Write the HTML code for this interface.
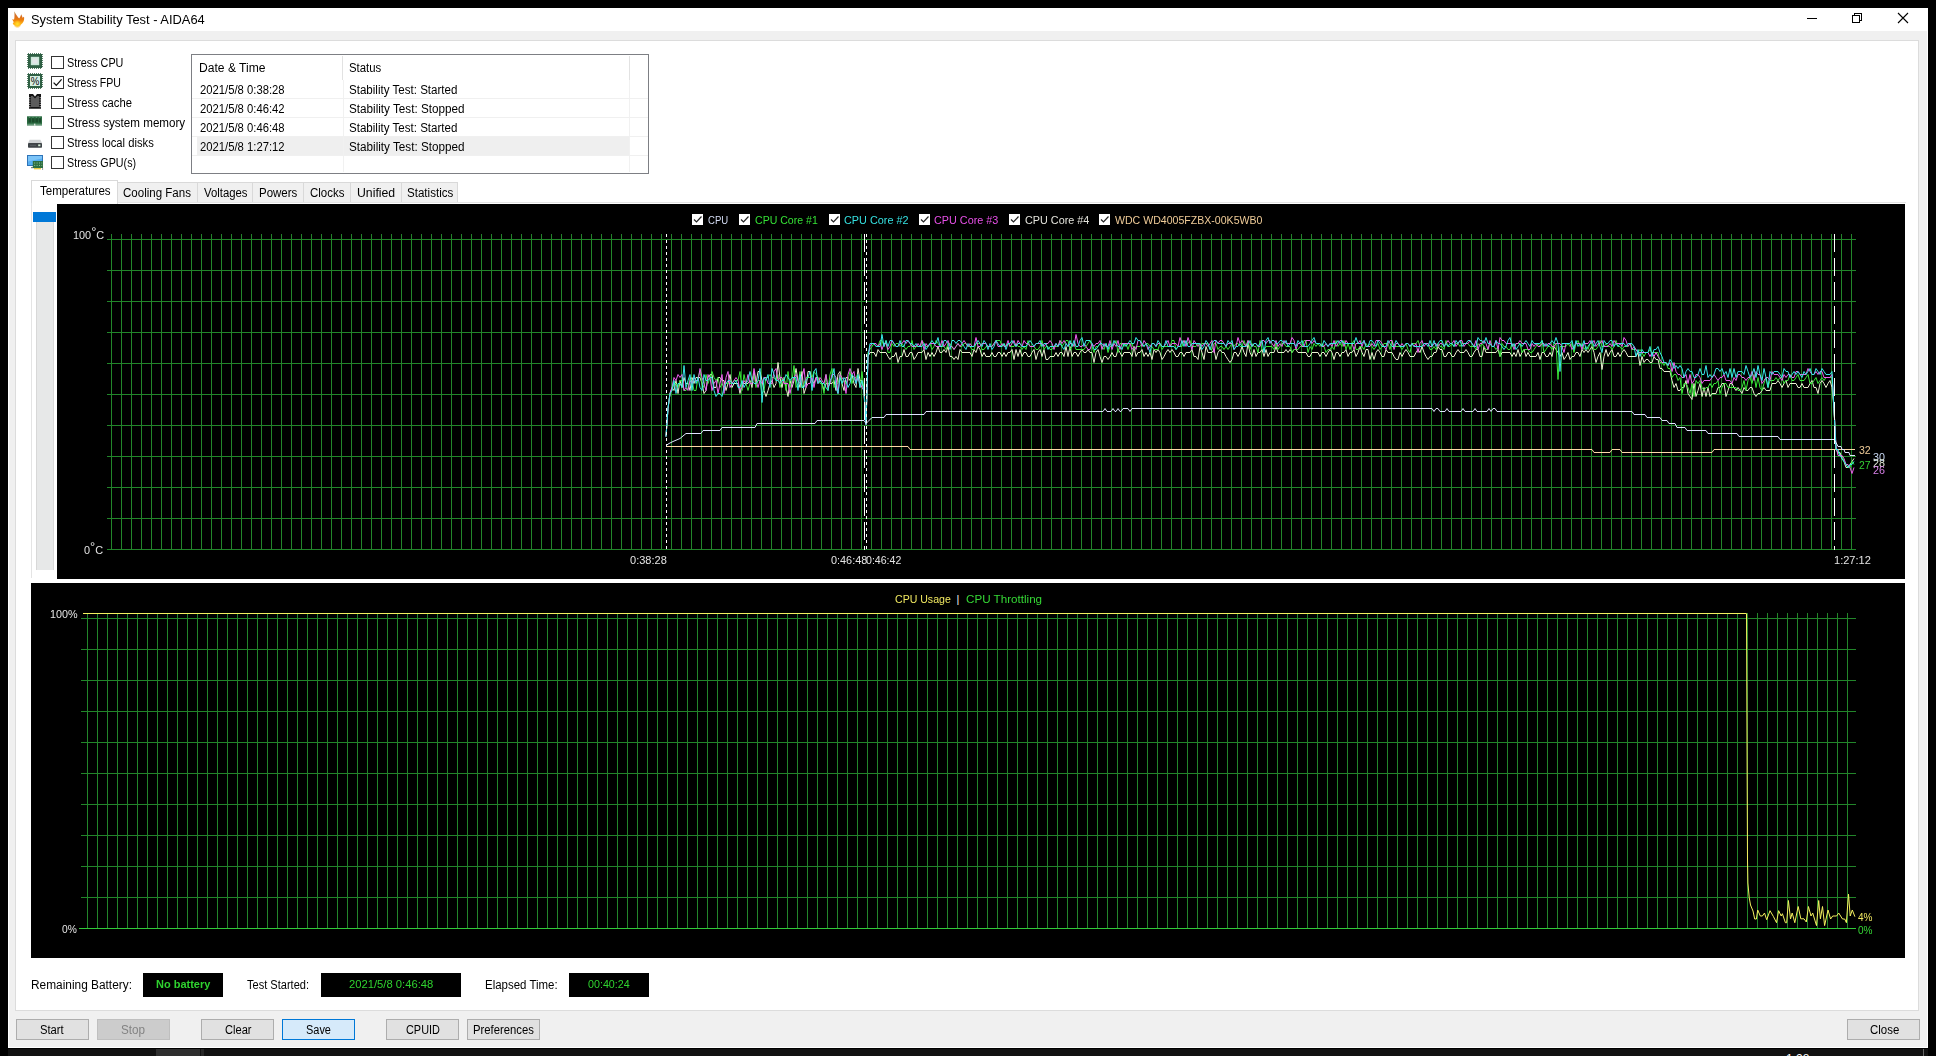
<!DOCTYPE html><html><head><meta charset="utf-8"><title>System Stability Test - AIDA64</title><style>
*{box-sizing:border-box}
html,body{margin:0;padding:0}
body{width:1936px;height:1056px;background:#000;overflow:hidden;position:relative;font-family:'Liberation Sans',sans-serif}
.a{position:absolute}
.t{position:absolute;white-space:pre;line-height:20px;height:20px;transform-origin:0 0;font-family:'Liberation Sans',sans-serif}
.ch{position:absolute;display:block}
.btn{position:absolute;top:1019px;height:21px;width:73px;background:#e1e1e1;border:1px solid #adadad}
.tab{position:absolute;top:182px;height:21px;background:#f0f0f0;border:1px solid #d9d9d9;border-bottom:none}
.cb{position:absolute;left:51px;width:13px;height:13px;background:#fff;border:1px solid #333}
.hl{position:absolute;left:192px;width:437px;height:1px;background:#f0f0f0}
.bk{position:absolute;top:973px;height:24px;background:#000}
</style></head><body><div class="a" style="left:8px;top:8px;width:1920px;height:1040px;background:#f0f0f0;border:1px solid #fff"></div>
<div class="a" style="left:8px;top:8px;width:1920px;height:23px;background:#fff"></div>
<div class="a" style="left:8px;top:1049px;width:1920px;height:7px;background:#111"></div>
<div class="a" style="left:156px;top:1049px;width:44px;height:7px;background:#2e2e2e"></div>
<div class="a" style="left:201px;top:1049px;width:3px;height:7px;background:#262626"></div>
<div class="a" style="left:1923px;top:1049px;width:1px;height:7px;background:#666"></div>
<div class="a" style="left:1786px;top:1052.5px;width:30px;height:4px;overflow:hidden"><span style="position:absolute;left:0;top:0;font-size:12px;line-height:12px;color:#fff;white-space:pre">1:28</span></div>
<svg class="a" style="left:1800px;top:8px" width="120" height="23" viewBox="1800 8 120 23" shape-rendering="crispEdges"><path d="M1807 18.5h10" stroke="#000"/><path d="M1852.5 15.5h7v7h-7z" fill="none" stroke="#000"/><path d="M1854.5 15.5v-2h7v7h-2" fill="none" stroke="#000"/><path d="M1898 13l10 10M1908 13l-10 10" stroke="#000" stroke-width="1.1" shape-rendering="geometricPrecision"/></svg>
<svg class="a" style="left:8px;top:8px" width="22" height="22" viewBox="8 8 22 22"><defs><linearGradient id="fg" x1="0" y1="11" x2="0" y2="27" gradientUnits="userSpaceOnUse"><stop offset="0" stop-color="#b89450"/><stop offset=".3" stop-color="#d8702a"/><stop offset=".55" stop-color="#ec7c0c"/><stop offset=".8" stop-color="#ffb418"/><stop offset="1" stop-color="#ffe23a"/></linearGradient><radialGradient id="fy" cx="17.4" cy="24" r="4.2" gradientUnits="userSpaceOnUse"><stop offset="0" stop-color="#ffe030"/><stop offset=".55" stop-color="#ffc21a" stop-opacity=".85"/><stop offset="1" stop-color="#ff9a10" stop-opacity="0"/></radialGradient><filter id="fb" x="-20%" y="-20%" width="140%" height="140%"><feGaussianBlur stdDeviation=".35"/></filter></defs><g filter="url(#fb)"><path d="M14.2 11.3C15.2 13.2 16.6 15.4 18 17.2C18.5 17.9 19 18.4 19.4 18.3C20 17.2 20.7 15.6 21.3 14.2C21.8 15.4 22.2 16.6 22.6 17.8C23 17.4 23.5 17 24 16.7C24.3 18.4 24.2 20.2 23.4 21.8C22.3 24 20.2 25.8 17.6 26.1C16.2 25.9 14.5 25.3 13.2 24.4C13.4 24.2 13.2 23.8 12.7 23.4C13.3 23 13.7 22.5 13.6 21.9C13.2 21 12.6 20.2 12.1 19.3C12.9 19.4 13.6 19.6 14.1 19.5C14.6 17 14.6 14 14.2 11.3Z" fill="url(#fg)"/><circle cx="17.4" cy="24" r="4.2" fill="url(#fy)"/></g></svg>
<div class="a" style="left:15px;top:40px;width:1904px;height:971px;background:#fff;border:1px solid #dcdcdc"></div>
<svg class="a" style="left:26px;top:52px" width="20" height="120" viewBox="26 52 20 120"><rect x="28" y="54" width="14" height="14" fill="#2f6044"/><path d="M28 53.6h14M28 68.4h14" stroke="#2f6044" stroke-width="0.9" stroke-dasharray="1 1"/><path d="M27.6 54v14M42.4 54v14" stroke="#2f6044" stroke-width="0.9" stroke-dasharray="1 1"/><rect x="30.8" y="56.8" width="8.4" height="8.4" fill="#cbe8da"/><rect x="32.4" y="58.4" width="5.2" height="5.2" fill="#e8e4ea" opacity=".85"/><rect x="28" y="74" width="14" height="14" fill="#2f6044"/><path d="M28 73.6h14M28 88.4h14" stroke="#2f6044" stroke-width="0.9" stroke-dasharray="1 1"/><path d="M27.6 74v14M42.4 74v14" stroke="#2f6044" stroke-width="0.9" stroke-dasharray="1 1"/><rect x="30" y="76" width="10" height="10" fill="#d6eee2"/><text x="35" y="84.7" font-family="Liberation Sans,sans-serif" font-size="10.5" text-anchor="middle" fill="#0a0a0a" textLength="8.6" lengthAdjust="spacingAndGlyphs">%</text><path d="M29 94h4l2 2.4l2-2.4h4v14.7h-12z" fill="#141414"/><path d="M31 96h1.6l2.4 2.6l2.4-2.6h1.6v11h-8z" fill="#5c5c5c"/><path d="M29.8 97.2v10M40.2 97.2v10" stroke="#fff" stroke-width="0.9" stroke-dasharray="1 1.25"/><rect x="27" y="116.3" width="15" height="9.2" fill="#2a6a40"/><path d="M28.5 118.2h2.6v4.2h-2.6zM32 118.2h2.6v4.2h-2.6zM35.4 118.2h2.6v4.2h-2.6zM38.8 118.2h2.2v4.2h-2.2z" fill="#1b4a2b"/><path d="M29 117.2h11.5" stroke="#6fae86" stroke-width="0.8" stroke-dasharray="1.2 2.2"/><path d="M27 124.4h7M35.6 124.4h6.4" stroke="#5f9472" stroke-width="1.2"/><rect x="34.2" y="123.6" width="1.2" height="2" fill="#fff"/><path d="M29.6 139.8h10.8l1.6 3.2h-14z" fill="#cfd2d4"/><rect x="28" y="143" width="14" height="4.8" rx="0.8" fill="#3f4448"/><rect x="30" y="144.8" width="6" height="1" fill="#5a6064"/><rect x="38.2" y="144.4" width="2.2" height="1.8" fill="#d8f0d8"/><rect x="27" y="155" width="16" height="11" fill="#2f74b8"/><rect x="28" y="156" width="14" height="9" fill="#56aef2"/><path d="M28 156h14v2.5l-14 3z" fill="#7cc4f8"/><rect x="31" y="167" width="6" height="1.2" fill="#7a8085"/><rect x="32.8" y="161" width="10.2" height="7" fill="#2e6e40"/><path d="M34.2 163h8M34.2 165.4h8" stroke="#9fd0a8" stroke-width="0.9" stroke-dasharray="1 1.4"/><path d="M34 168.7h7" stroke="#e8c83a" stroke-width="1.3"/><path d="M42.6 168v2" stroke="#888" stroke-width="0.8"/></svg>
<div class="cb" style="top:56px"></div>
<div class="cb" style="top:76px"></div>
<div class="cb" style="top:96px"></div>
<div class="cb" style="top:116px"></div>
<div class="cb" style="top:136px"></div>
<div class="cb" style="top:156px"></div>
<svg class="a" style="left:51px;top:76px" width="13" height="13" viewBox="0 0 13 13"><path d="M2.6 6.6L5.3 9.3L10.6 3.4" fill="none" stroke="#111" stroke-width="1.25"/></svg>
<div class="a" style="left:191px;top:54px;width:458px;height:120px;background:#fff;border:1px solid #7d7f84"></div>
<div class="a" style="left:197px;top:137px;width:432px;height:18px;background:#efefef"></div>
<div class="a" style="left:342px;top:56px;width:1px;height:24px;background:#e2e2e2"></div>
<div class="a" style="left:629px;top:56px;width:1px;height:24px;background:#e2e2e2"></div>
<div class="a" style="left:343px;top:80px;width:1px;height:92px;background:#f1f1f1"></div>
<div class="a" style="left:629px;top:80px;width:1px;height:92px;background:#f1f1f1"></div>
<div class="hl" style="top:98px;width:456px"></div>
<div class="hl" style="top:117px;width:456px"></div>
<div class="hl" style="top:136px;width:456px"></div>
<div class="hl" style="top:155px;width:456px"></div>
<div class="tab" style="left:117px;width:81px"></div>
<div class="tab" style="left:197px;width:56px"></div>
<div class="tab" style="left:252px;width:52px"></div>
<div class="tab" style="left:303px;width:48px"></div>
<div class="tab" style="left:350px;width:52px"></div>
<div class="tab" style="left:401px;width:57px"></div>
<div class="a" style="left:31px;top:180px;width:87px;height:24px;background:#fff;border:1px solid #d9d9d9;border-bottom:none"></div>
<div class="a" style="left:31px;top:203px;width:1px;height:375px;background:#e4e4e4"></div>
<div class="a" style="left:118px;top:202px;width:1788px;height:1px;background:#e4e4e4"></div>
<div class="a" style="left:36px;top:222px;width:18px;height:348px;background:#e7e8e8;border-left:1px solid #d8d8d8;border-right:1px solid #d8d8d8"></div>
<div class="a" style="left:33px;top:212px;width:23px;height:10px;background:#0078d7"></div>
<svg class="ch" style="left:57px;top:204px" width="1848" height="375" viewBox="57 204 1848 375" shape-rendering="crispEdges"><rect x="57" y="204" width="1848" height="375" fill="#000"/><path d="M111.5 234V550 M121.5 234V550 M131.5 234V550 M141.5 234V550 M151.5 234V550 M161.5 234V550 M171.5 234V550 M181.5 234V550 M191.5 234V550 M201.5 234V550 M211.5 234V550 M221.5 234V550 M231.5 234V550 M241.5 234V550 M251.5 234V550 M261.5 234V550 M271.5 234V550 M281.5 234V550 M291.5 234V550 M301.5 234V550 M311.5 234V550 M321.5 234V550 M331.5 234V550 M341.5 234V550 M351.5 234V550 M361.5 234V550 M371.5 234V550 M381.5 234V550 M391.5 234V550 M401.5 234V550 M411.5 234V550 M421.5 234V550 M431.5 234V550 M441.5 234V550 M451.5 234V550 M461.5 234V550 M471.5 234V550 M481.5 234V550 M491.5 234V550 M501.5 234V550 M511.5 234V550 M521.5 234V550 M531.5 234V550 M541.5 234V550 M551.5 234V550 M561.5 234V550 M571.5 234V550 M581.5 234V550 M591.5 234V550 M601.5 234V550 M611.5 234V550 M621.5 234V550 M631.5 234V550 M641.5 234V550 M651.5 234V550 M661.5 234V550 M671.5 234V550 M681.5 234V550 M691.5 234V550 M701.5 234V550 M711.5 234V550 M721.5 234V550 M731.5 234V550 M741.5 234V550 M751.5 234V550 M761.5 234V550 M771.5 234V550 M781.5 234V550 M791.5 234V550 M801.5 234V550 M811.5 234V550 M821.5 234V550 M831.5 234V550 M841.5 234V550 M851.5 234V550 M861.5 234V550 M871.5 234V550 M881.5 234V550 M891.5 234V550 M901.5 234V550 M911.5 234V550 M921.5 234V550 M931.5 234V550 M941.5 234V550 M951.5 234V550 M961.5 234V550 M971.5 234V550 M981.5 234V550 M991.5 234V550 M1001.5 234V550 M1011.5 234V550 M1021.5 234V550 M1031.5 234V550 M1041.5 234V550 M1051.5 234V550 M1061.5 234V550 M1071.5 234V550 M1081.5 234V550 M1091.5 234V550 M1101.5 234V550 M1111.5 234V550 M1121.5 234V550 M1131.5 234V550 M1141.5 234V550 M1151.5 234V550 M1161.5 234V550 M1171.5 234V550 M1181.5 234V550 M1191.5 234V550 M1201.5 234V550 M1211.5 234V550 M1221.5 234V550 M1231.5 234V550 M1241.5 234V550 M1251.5 234V550 M1261.5 234V550 M1271.5 234V550 M1281.5 234V550 M1291.5 234V550 M1301.5 234V550 M1311.5 234V550 M1321.5 234V550 M1331.5 234V550 M1341.5 234V550 M1351.5 234V550 M1361.5 234V550 M1371.5 234V550 M1381.5 234V550 M1391.5 234V550 M1401.5 234V550 M1411.5 234V550 M1421.5 234V550 M1431.5 234V550 M1441.5 234V550 M1451.5 234V550 M1461.5 234V550 M1471.5 234V550 M1481.5 234V550 M1491.5 234V550 M1501.5 234V550 M1511.5 234V550 M1521.5 234V550 M1531.5 234V550 M1541.5 234V550 M1551.5 234V550 M1561.5 234V550 M1571.5 234V550 M1581.5 234V550 M1591.5 234V550 M1601.5 234V550 M1611.5 234V550 M1621.5 234V550 M1631.5 234V550 M1641.5 234V550 M1651.5 234V550 M1661.5 234V550 M1671.5 234V550 M1681.5 234V550 M1691.5 234V550 M1701.5 234V550 M1711.5 234V550 M1721.5 234V550 M1731.5 234V550 M1741.5 234V550 M1751.5 234V550 M1761.5 234V550 M1771.5 234V550 M1781.5 234V550 M1791.5 234V550 M1801.5 234V550 M1811.5 234V550 M1821.5 234V550 M1831.5 234V550 M1841.5 234V550 M1851.5 234V550 M107 239.5H1856 M107 270.5H1856 M107 301.5H1856 M107 332.5H1856 M107 363.5H1856 M107 394.5H1856 M107 425.5H1856 M107 456.5H1856 M107 487.5H1856 M107 518.5H1856 M107 549.5H1856" stroke="#22862a" stroke-width="1" fill="none"/><polyline points="666.0,446.5 908.0,446.5 910.0,449.5 1592.0,449.5 1594.0,452.5 1610.0,452.5 1612.0,449.5 1620.0,449.5 1622.0,452.5 1712.0,452.5 1714.0,449.5 1855.0,449.5" fill="none" stroke="#ffd8a8" stroke-width="1" shape-rendering="geometricPrecision" stroke-linejoin="bevel" /><polyline points="666.0,436.5 668.0,408.5 670.0,393.5 672.0,387.5 674.0,390.5 676.0,380.5 678.0,393.5 680.0,380.5 682.0,387.5 684.0,377.5 686.0,383.5 688.0,383.5 690.0,390.5 692.0,377.5 694.0,383.5 696.0,377.5 698.0,377.5 700.0,377.5 702.0,383.5 704.0,393.5 706.0,390.5 708.0,377.5 710.0,374.5 712.0,374.5 714.0,387.5 716.0,387.5 718.0,377.5 720.0,377.5 722.0,380.5 724.0,380.5 726.0,390.5 728.0,383.5 730.0,374.5 732.0,387.5 734.0,383.5 736.0,383.5 738.0,383.5 740.0,393.5 742.0,383.5 744.0,383.5 746.0,383.5 748.0,383.5 750.0,380.5 752.0,387.5 754.0,371.5 756.0,383.5 758.0,371.5 760.0,371.5 762.0,380.5 764.0,390.5 766.0,396.5 768.0,390.5 770.0,383.5 772.0,380.5 774.0,387.5 776.0,383.5 778.0,362.5 780.0,377.5 782.0,387.5 784.0,377.5 786.0,387.5 788.0,396.5 790.0,380.5 792.0,387.5 794.0,380.5 796.0,368.5 798.0,380.5 800.0,387.5 802.0,371.5 804.0,393.5 806.0,387.5 808.0,371.5 810.0,371.5 812.0,380.5 814.0,383.5 816.0,377.5 818.0,377.5 820.0,380.5 822.0,383.5 824.0,390.5 826.0,383.5 828.0,383.5 830.0,383.5 832.0,383.5 834.0,380.5 836.0,390.5 838.0,374.5 840.0,371.5 842.0,383.5 844.0,390.5 846.0,377.5 848.0,377.5 850.0,380.5 852.0,374.5 854.0,383.5 856.0,387.5 858.0,368.5 860.0,380.5 862.0,380.5 864.0,393.5 866.0,424.5 868.0,356.5 870.0,352.5 872.0,352.5 874.0,352.5 876.0,356.5 878.0,349.5 880.0,352.5 882.0,352.5 884.0,352.5 886.0,352.5 888.0,356.5 890.0,359.5 892.0,356.5 894.0,356.5 896.0,352.5 898.0,362.5 900.0,356.5 902.0,356.5 904.0,349.5 906.0,356.5 908.0,356.5 910.0,352.5 912.0,352.5 914.0,359.5 916.0,356.5 918.0,352.5 920.0,352.5 922.0,352.5 924.0,349.5 926.0,359.5 928.0,352.5 930.0,356.5 932.0,352.5 934.0,356.5 936.0,352.5 938.0,346.5 940.0,352.5 942.0,352.5 944.0,349.5 946.0,352.5 948.0,346.5 950.0,356.5 952.0,356.5 954.0,359.5 956.0,356.5 958.0,359.5 960.0,349.5 962.0,352.5 964.0,352.5 966.0,352.5 968.0,352.5 970.0,352.5 972.0,356.5 974.0,349.5 976.0,352.5 978.0,346.5 980.0,349.5 982.0,356.5 984.0,352.5 986.0,356.5 988.0,356.5 990.0,356.5 992.0,352.5 994.0,356.5 996.0,356.5 998.0,352.5 1000.0,352.5 1002.0,356.5 1004.0,352.5 1006.0,356.5 1008.0,352.5 1010.0,352.5 1012.0,349.5 1014.0,359.5 1016.0,349.5 1018.0,356.5 1020.0,349.5 1022.0,356.5 1024.0,352.5 1026.0,352.5 1028.0,356.5 1030.0,356.5 1032.0,352.5 1034.0,349.5 1036.0,359.5 1038.0,352.5 1040.0,349.5 1042.0,356.5 1044.0,349.5 1046.0,359.5 1048.0,359.5 1050.0,356.5 1052.0,356.5 1054.0,356.5 1056.0,352.5 1058.0,356.5 1060.0,352.5 1062.0,352.5 1064.0,356.5 1066.0,346.5 1068.0,356.5 1070.0,346.5 1072.0,356.5 1074.0,352.5 1076.0,352.5 1078.0,356.5 1080.0,352.5 1082.0,349.5 1084.0,352.5 1086.0,352.5 1088.0,349.5 1090.0,352.5 1092.0,352.5 1094.0,362.5 1096.0,352.5 1098.0,349.5 1100.0,356.5 1102.0,362.5 1104.0,356.5 1106.0,356.5 1108.0,359.5 1110.0,356.5 1112.0,352.5 1114.0,356.5 1116.0,356.5 1118.0,349.5 1120.0,352.5 1122.0,356.5 1124.0,352.5 1126.0,352.5 1128.0,352.5 1130.0,352.5 1132.0,356.5 1134.0,346.5 1136.0,356.5 1138.0,352.5 1140.0,352.5 1142.0,349.5 1144.0,356.5 1146.0,352.5 1148.0,356.5 1150.0,352.5 1152.0,359.5 1154.0,349.5 1156.0,352.5 1158.0,349.5 1160.0,352.5 1162.0,359.5 1164.0,356.5 1166.0,352.5 1168.0,349.5 1170.0,352.5 1172.0,349.5 1174.0,352.5 1176.0,356.5 1178.0,356.5 1180.0,352.5 1182.0,352.5 1184.0,356.5 1186.0,352.5 1188.0,352.5 1190.0,352.5 1192.0,349.5 1194.0,356.5 1196.0,356.5 1198.0,359.5 1200.0,346.5 1202.0,352.5 1204.0,359.5 1206.0,346.5 1208.0,352.5 1210.0,352.5 1212.0,352.5 1214.0,349.5 1216.0,359.5 1218.0,352.5 1220.0,349.5 1222.0,352.5 1224.0,352.5 1226.0,356.5 1228.0,359.5 1230.0,362.5 1232.0,359.5 1234.0,352.5 1236.0,352.5 1238.0,356.5 1240.0,352.5 1242.0,346.5 1244.0,352.5 1246.0,356.5 1248.0,343.5 1250.0,352.5 1252.0,356.5 1254.0,349.5 1256.0,356.5 1258.0,352.5 1260.0,352.5 1262.0,349.5 1264.0,356.5 1266.0,349.5 1268.0,356.5 1270.0,352.5 1272.0,352.5 1274.0,352.5 1276.0,346.5 1278.0,352.5 1280.0,352.5 1282.0,352.5 1284.0,352.5 1286.0,349.5 1288.0,352.5 1290.0,349.5 1292.0,352.5 1294.0,349.5 1296.0,349.5 1298.0,352.5 1300.0,352.5 1302.0,352.5 1304.0,352.5 1306.0,352.5 1308.0,356.5 1310.0,356.5 1312.0,352.5 1314.0,352.5 1316.0,352.5 1318.0,352.5 1320.0,356.5 1322.0,352.5 1324.0,352.5 1326.0,356.5 1328.0,352.5 1330.0,349.5 1332.0,352.5 1334.0,359.5 1336.0,352.5 1338.0,352.5 1340.0,356.5 1342.0,352.5 1344.0,352.5 1346.0,349.5 1348.0,356.5 1350.0,352.5 1352.0,352.5 1354.0,349.5 1356.0,356.5 1358.0,352.5 1360.0,346.5 1362.0,352.5 1364.0,356.5 1366.0,349.5 1368.0,349.5 1370.0,359.5 1372.0,352.5 1374.0,359.5 1376.0,352.5 1378.0,349.5 1380.0,352.5 1382.0,356.5 1384.0,356.5 1386.0,349.5 1388.0,352.5 1390.0,352.5 1392.0,352.5 1394.0,356.5 1396.0,359.5 1398.0,359.5 1400.0,352.5 1402.0,356.5 1404.0,352.5 1406.0,349.5 1408.0,352.5 1410.0,356.5 1412.0,356.5 1414.0,356.5 1416.0,352.5 1418.0,349.5 1420.0,352.5 1422.0,346.5 1424.0,352.5 1426.0,356.5 1428.0,359.5 1430.0,356.5 1432.0,356.5 1434.0,352.5 1436.0,352.5 1438.0,346.5 1440.0,349.5 1442.0,349.5 1444.0,356.5 1446.0,356.5 1448.0,352.5 1450.0,352.5 1452.0,356.5 1454.0,356.5 1456.0,352.5 1458.0,349.5 1460.0,352.5 1462.0,352.5 1464.0,352.5 1466.0,349.5 1468.0,352.5 1470.0,356.5 1472.0,356.5 1474.0,352.5 1476.0,349.5 1478.0,349.5 1480.0,356.5 1482.0,356.5 1484.0,346.5 1486.0,352.5 1488.0,352.5 1490.0,352.5 1492.0,352.5 1494.0,352.5 1496.0,352.5 1498.0,349.5 1500.0,356.5 1502.0,352.5 1504.0,352.5 1506.0,352.5 1508.0,352.5 1510.0,352.5 1512.0,356.5 1514.0,352.5 1516.0,356.5 1518.0,349.5 1520.0,356.5 1522.0,352.5 1524.0,349.5 1526.0,356.5 1528.0,352.5 1530.0,356.5 1532.0,356.5 1534.0,356.5 1536.0,356.5 1538.0,352.5 1540.0,359.5 1542.0,352.5 1544.0,352.5 1546.0,356.5 1548.0,356.5 1550.0,352.5 1552.0,356.5 1554.0,346.5 1556.0,349.5 1558.0,352.5 1560.0,356.5 1562.0,352.5 1564.0,359.5 1566.0,356.5 1568.0,352.5 1570.0,359.5 1572.0,356.5 1574.0,356.5 1576.0,352.5 1578.0,352.5 1580.0,356.5 1582.0,349.5 1584.0,352.5 1586.0,349.5 1588.0,352.5 1590.0,349.5 1592.0,346.5 1594.0,352.5 1596.0,362.5 1598.0,356.5 1600.0,352.5 1602.0,369.5 1604.0,356.5 1606.0,349.5 1608.0,356.5 1610.0,352.5 1612.0,349.5 1614.0,356.5 1616.0,356.5 1618.0,352.5 1620.0,356.5 1622.0,352.5 1624.0,349.5 1626.0,352.5 1628.0,356.5 1630.0,356.5 1632.0,356.5 1634.0,356.5 1636.0,356.5 1638.0,352.5 1640.0,365.5 1642.0,356.5 1644.0,362.5 1646.0,359.5 1648.0,359.5 1650.0,362.5 1652.0,362.5 1654.0,356.5 1656.0,359.5 1658.0,359.5 1660.0,368.5 1662.0,368.5 1664.0,371.5 1666.0,371.5 1668.0,371.5 1670.0,371.5 1672.0,380.5 1674.0,387.5 1676.0,383.5 1678.0,390.5 1680.0,390.5 1682.0,387.5 1684.0,387.5 1686.0,380.5 1688.0,393.5 1690.0,396.5 1692.0,399.5 1694.0,383.5 1696.0,396.5 1698.0,390.5 1700.0,383.5 1702.0,396.5 1704.0,387.5 1706.0,396.5 1708.0,387.5 1710.0,396.5 1712.0,393.5 1714.0,393.5 1716.0,393.5 1718.0,387.5 1720.0,387.5 1722.0,383.5 1724.0,383.5 1726.0,396.5 1728.0,390.5 1730.0,383.5 1732.0,383.5 1734.0,387.5 1736.0,390.5 1738.0,387.5 1740.0,390.5 1742.0,393.5 1744.0,387.5 1746.0,390.5 1748.0,390.5 1750.0,387.5 1752.0,387.5 1754.0,393.5 1756.0,396.5 1758.0,393.5 1760.0,393.5 1762.0,390.5 1764.0,387.5 1766.0,390.5 1768.0,390.5 1770.0,390.5 1772.0,383.5 1774.0,383.5 1776.0,383.5 1778.0,380.5 1780.0,383.5 1782.0,387.5 1784.0,383.5 1786.0,380.5 1788.0,387.5 1790.0,383.5 1792.0,383.5 1794.0,383.5 1796.0,383.5 1798.0,387.5 1800.0,387.5 1802.0,383.5 1804.0,387.5 1806.0,387.5 1808.0,387.5 1810.0,383.5 1812.0,380.5 1814.0,387.5 1816.0,387.5 1818.0,393.5 1820.0,383.5 1822.0,380.5 1824.0,383.5 1826.0,387.5 1828.0,383.5 1830.0,380.5 1832.0,387.5 1834.0,408.5 1836.0,449.5 1838.0,452.5 1840.0,452.5 1842.0,458.5 1844.0,461.5 1846.0,467.5 1848.0,467.5 1850.0,464.5 1852.0,461.5 1854.0,458.5" fill="none" stroke="#e8f0d0" stroke-width="1" shape-rendering="geometricPrecision" stroke-linejoin="bevel" /><polyline points="666.0,436.5 668.0,408.5 670.0,393.5 672.0,390.5 674.0,383.5 676.0,383.5 678.0,387.5 680.0,380.5 682.0,380.5 684.0,390.5 686.0,390.5 688.0,387.5 690.0,377.5 692.0,380.5 694.0,390.5 696.0,390.5 698.0,377.5 700.0,371.5 702.0,383.5 704.0,387.5 706.0,374.5 708.0,383.5 710.0,377.5 712.0,371.5 714.0,377.5 716.0,380.5 718.0,377.5 720.0,387.5 722.0,383.5 724.0,387.5 726.0,383.5 728.0,383.5 730.0,383.5 732.0,383.5 734.0,380.5 736.0,380.5 738.0,380.5 740.0,371.5 742.0,390.5 744.0,374.5 746.0,383.5 748.0,390.5 750.0,383.5 752.0,380.5 754.0,374.5 756.0,387.5 758.0,380.5 760.0,380.5 762.0,393.5 764.0,390.5 766.0,377.5 768.0,377.5 770.0,374.5 772.0,377.5 774.0,377.5 776.0,380.5 778.0,374.5 780.0,387.5 782.0,380.5 784.0,377.5 786.0,390.5 788.0,371.5 790.0,387.5 792.0,380.5 794.0,365.5 796.0,387.5 798.0,383.5 800.0,371.5 802.0,387.5 804.0,383.5 806.0,377.5 808.0,377.5 810.0,377.5 812.0,377.5 814.0,371.5 816.0,374.5 818.0,377.5 820.0,383.5 822.0,383.5 824.0,393.5 826.0,374.5 828.0,390.5 830.0,374.5 832.0,368.5 834.0,387.5 836.0,383.5 838.0,383.5 840.0,374.5 842.0,383.5 844.0,380.5 846.0,383.5 848.0,380.5 850.0,371.5 852.0,383.5 854.0,377.5 856.0,377.5 858.0,374.5 860.0,387.5 862.0,371.5 864.0,390.5 866.0,421.5 868.0,352.5 870.0,349.5 872.0,346.5 874.0,343.5 876.0,346.5 878.0,346.5 880.0,340.5 882.0,340.5 884.0,346.5 886.0,340.5 888.0,352.5 890.0,352.5 892.0,343.5 894.0,346.5 896.0,343.5 898.0,343.5 900.0,346.5 902.0,343.5 904.0,346.5 906.0,349.5 908.0,346.5 910.0,346.5 912.0,340.5 914.0,349.5 916.0,346.5 918.0,346.5 920.0,346.5 922.0,340.5 924.0,343.5 926.0,346.5 928.0,346.5 930.0,343.5 932.0,349.5 934.0,346.5 936.0,340.5 938.0,343.5 940.0,346.5 942.0,346.5 944.0,346.5 946.0,349.5 948.0,343.5 950.0,343.5 952.0,346.5 954.0,349.5 956.0,346.5 958.0,343.5 960.0,346.5 962.0,346.5 964.0,343.5 966.0,343.5 968.0,346.5 970.0,346.5 972.0,349.5 974.0,349.5 976.0,343.5 978.0,343.5 980.0,343.5 982.0,349.5 984.0,349.5 986.0,346.5 988.0,346.5 990.0,346.5 992.0,346.5 994.0,343.5 996.0,340.5 998.0,340.5 1000.0,340.5 1002.0,346.5 1004.0,343.5 1006.0,346.5 1008.0,343.5 1010.0,346.5 1012.0,346.5 1014.0,346.5 1016.0,343.5 1018.0,346.5 1020.0,346.5 1022.0,349.5 1024.0,346.5 1026.0,349.5 1028.0,340.5 1030.0,346.5 1032.0,346.5 1034.0,346.5 1036.0,349.5 1038.0,349.5 1040.0,346.5 1042.0,340.5 1044.0,349.5 1046.0,346.5 1048.0,346.5 1050.0,349.5 1052.0,349.5 1054.0,346.5 1056.0,346.5 1058.0,346.5 1060.0,340.5 1062.0,346.5 1064.0,343.5 1066.0,340.5 1068.0,340.5 1070.0,349.5 1072.0,346.5 1074.0,343.5 1076.0,349.5 1078.0,349.5 1080.0,349.5 1082.0,349.5 1084.0,349.5 1086.0,346.5 1088.0,343.5 1090.0,340.5 1092.0,346.5 1094.0,352.5 1096.0,346.5 1098.0,346.5 1100.0,343.5 1102.0,346.5 1104.0,349.5 1106.0,343.5 1108.0,352.5 1110.0,346.5 1112.0,346.5 1114.0,343.5 1116.0,340.5 1118.0,352.5 1120.0,343.5 1122.0,343.5 1124.0,346.5 1126.0,343.5 1128.0,349.5 1130.0,343.5 1132.0,343.5 1134.0,349.5 1136.0,346.5 1138.0,346.5 1140.0,346.5 1142.0,343.5 1144.0,346.5 1146.0,343.5 1148.0,343.5 1150.0,346.5 1152.0,346.5 1154.0,349.5 1156.0,349.5 1158.0,349.5 1160.0,343.5 1162.0,349.5 1164.0,346.5 1166.0,346.5 1168.0,346.5 1170.0,346.5 1172.0,340.5 1174.0,340.5 1176.0,349.5 1178.0,346.5 1180.0,346.5 1182.0,346.5 1184.0,340.5 1186.0,343.5 1188.0,343.5 1190.0,340.5 1192.0,346.5 1194.0,346.5 1196.0,346.5 1198.0,343.5 1200.0,346.5 1202.0,343.5 1204.0,343.5 1206.0,343.5 1208.0,343.5 1210.0,349.5 1212.0,349.5 1214.0,343.5 1216.0,343.5 1218.0,349.5 1220.0,346.5 1222.0,346.5 1224.0,349.5 1226.0,346.5 1228.0,349.5 1230.0,346.5 1232.0,343.5 1234.0,346.5 1236.0,343.5 1238.0,343.5 1240.0,346.5 1242.0,346.5 1244.0,340.5 1246.0,346.5 1248.0,340.5 1250.0,349.5 1252.0,343.5 1254.0,346.5 1256.0,346.5 1258.0,352.5 1260.0,340.5 1262.0,349.5 1264.0,349.5 1266.0,346.5 1268.0,346.5 1270.0,346.5 1272.0,346.5 1274.0,349.5 1276.0,343.5 1278.0,349.5 1280.0,346.5 1282.0,343.5 1284.0,343.5 1286.0,346.5 1288.0,346.5 1290.0,346.5 1292.0,352.5 1294.0,349.5 1296.0,349.5 1298.0,349.5 1300.0,346.5 1302.0,346.5 1304.0,340.5 1306.0,340.5 1308.0,352.5 1310.0,346.5 1312.0,349.5 1314.0,343.5 1316.0,346.5 1318.0,343.5 1320.0,346.5 1322.0,343.5 1324.0,346.5 1326.0,352.5 1328.0,349.5 1330.0,349.5 1332.0,346.5 1334.0,349.5 1336.0,340.5 1338.0,346.5 1340.0,343.5 1342.0,346.5 1344.0,340.5 1346.0,349.5 1348.0,343.5 1350.0,349.5 1352.0,343.5 1354.0,340.5 1356.0,349.5 1358.0,349.5 1360.0,346.5 1362.0,346.5 1364.0,349.5 1366.0,343.5 1368.0,346.5 1370.0,343.5 1372.0,346.5 1374.0,349.5 1376.0,346.5 1378.0,343.5 1380.0,349.5 1382.0,346.5 1384.0,343.5 1386.0,343.5 1388.0,343.5 1390.0,349.5 1392.0,340.5 1394.0,346.5 1396.0,346.5 1398.0,346.5 1400.0,346.5 1402.0,349.5 1404.0,346.5 1406.0,343.5 1408.0,349.5 1410.0,352.5 1412.0,343.5 1414.0,343.5 1416.0,343.5 1418.0,340.5 1420.0,346.5 1422.0,346.5 1424.0,343.5 1426.0,343.5 1428.0,343.5 1430.0,349.5 1432.0,349.5 1434.0,346.5 1436.0,349.5 1438.0,343.5 1440.0,346.5 1442.0,346.5 1444.0,349.5 1446.0,340.5 1448.0,346.5 1450.0,346.5 1452.0,343.5 1454.0,346.5 1456.0,343.5 1458.0,343.5 1460.0,346.5 1462.0,343.5 1464.0,343.5 1466.0,343.5 1468.0,343.5 1470.0,346.5 1472.0,346.5 1474.0,346.5 1476.0,349.5 1478.0,343.5 1480.0,346.5 1482.0,343.5 1484.0,346.5 1486.0,349.5 1488.0,349.5 1490.0,343.5 1492.0,346.5 1494.0,346.5 1496.0,349.5 1498.0,346.5 1500.0,356.5 1502.0,343.5 1504.0,346.5 1506.0,346.5 1508.0,349.5 1510.0,349.5 1512.0,343.5 1514.0,346.5 1516.0,343.5 1518.0,343.5 1520.0,343.5 1522.0,352.5 1524.0,349.5 1526.0,349.5 1528.0,349.5 1530.0,352.5 1532.0,352.5 1534.0,349.5 1536.0,346.5 1538.0,343.5 1540.0,346.5 1542.0,340.5 1544.0,352.5 1546.0,349.5 1548.0,346.5 1550.0,346.5 1552.0,349.5 1554.0,343.5 1556.0,343.5 1558.0,379.5 1560.0,346.5 1562.0,346.5 1564.0,346.5 1566.0,346.5 1568.0,343.5 1570.0,346.5 1572.0,343.5 1574.0,352.5 1576.0,343.5 1578.0,340.5 1580.0,346.5 1582.0,343.5 1584.0,349.5 1586.0,346.5 1588.0,349.5 1590.0,343.5 1592.0,343.5 1594.0,349.5 1596.0,349.5 1598.0,346.5 1600.0,340.5 1602.0,346.5 1604.0,346.5 1606.0,343.5 1608.0,346.5 1610.0,346.5 1612.0,349.5 1614.0,346.5 1616.0,340.5 1618.0,346.5 1620.0,346.5 1622.0,349.5 1624.0,346.5 1626.0,346.5 1628.0,346.5 1630.0,343.5 1632.0,349.5 1634.0,349.5 1636.0,349.5 1638.0,352.5 1640.0,349.5 1642.0,352.5 1644.0,356.5 1646.0,352.5 1648.0,352.5 1650.0,349.5 1652.0,352.5 1654.0,352.5 1656.0,352.5 1658.0,352.5 1660.0,362.5 1662.0,362.5 1664.0,365.5 1666.0,362.5 1668.0,368.5 1670.0,368.5 1672.0,377.5 1674.0,374.5 1676.0,374.5 1678.0,380.5 1680.0,377.5 1682.0,393.5 1684.0,383.5 1686.0,383.5 1688.0,387.5 1690.0,393.5 1692.0,383.5 1694.0,396.5 1696.0,380.5 1698.0,383.5 1700.0,380.5 1702.0,387.5 1704.0,390.5 1706.0,387.5 1708.0,387.5 1710.0,383.5 1712.0,387.5 1714.0,383.5 1716.0,383.5 1718.0,380.5 1720.0,393.5 1722.0,387.5 1724.0,383.5 1726.0,383.5 1728.0,387.5 1730.0,387.5 1732.0,387.5 1734.0,387.5 1736.0,387.5 1738.0,390.5 1740.0,390.5 1742.0,387.5 1744.0,380.5 1746.0,390.5 1748.0,380.5 1750.0,377.5 1752.0,383.5 1754.0,374.5 1756.0,387.5 1758.0,377.5 1760.0,387.5 1762.0,390.5 1764.0,383.5 1766.0,377.5 1768.0,387.5 1770.0,380.5 1772.0,380.5 1774.0,380.5 1776.0,377.5 1778.0,380.5 1780.0,377.5 1782.0,377.5 1784.0,383.5 1786.0,380.5 1788.0,380.5 1790.0,374.5 1792.0,380.5 1794.0,380.5 1796.0,377.5 1798.0,374.5 1800.0,380.5 1802.0,380.5 1804.0,380.5 1806.0,377.5 1808.0,374.5 1810.0,383.5 1812.0,383.5 1814.0,380.5 1816.0,377.5 1818.0,383.5 1820.0,380.5 1822.0,377.5 1824.0,380.5 1826.0,377.5 1828.0,377.5 1830.0,377.5 1832.0,377.5 1834.0,408.5 1836.0,449.5 1838.0,452.5 1840.0,455.5 1842.0,455.5 1844.0,461.5 1846.0,464.5 1848.0,467.5 1850.0,467.5 1852.0,461.5 1854.0,464.5" fill="none" stroke="#38e838" stroke-width="1" shape-rendering="geometricPrecision" stroke-linejoin="bevel" /><polyline points="666.0,436.5 668.0,408.5 670.0,393.5 672.0,387.5 674.0,377.5 676.0,380.5 678.0,374.5 680.0,377.5 682.0,374.5 684.0,390.5 686.0,387.5 688.0,390.5 690.0,380.5 692.0,383.5 694.0,377.5 696.0,380.5 698.0,380.5 700.0,368.5 702.0,377.5 704.0,383.5 706.0,390.5 708.0,374.5 710.0,377.5 712.0,390.5 714.0,383.5 716.0,380.5 718.0,393.5 720.0,383.5 722.0,374.5 724.0,393.5 726.0,377.5 728.0,371.5 730.0,387.5 732.0,383.5 734.0,380.5 736.0,377.5 738.0,380.5 740.0,390.5 742.0,387.5 744.0,380.5 746.0,383.5 748.0,374.5 750.0,383.5 752.0,383.5 754.0,368.5 756.0,380.5 758.0,387.5 760.0,380.5 762.0,383.5 764.0,377.5 766.0,377.5 768.0,383.5 770.0,383.5 772.0,383.5 774.0,371.5 776.0,368.5 778.0,380.5 780.0,377.5 782.0,377.5 784.0,383.5 786.0,383.5 788.0,383.5 790.0,393.5 792.0,383.5 794.0,377.5 796.0,374.5 798.0,380.5 800.0,383.5 802.0,377.5 804.0,368.5 806.0,387.5 808.0,383.5 810.0,383.5 812.0,377.5 814.0,387.5 816.0,377.5 818.0,383.5 820.0,377.5 822.0,380.5 824.0,383.5 826.0,374.5 828.0,387.5 830.0,383.5 832.0,374.5 834.0,374.5 836.0,377.5 838.0,393.5 840.0,374.5 842.0,377.5 844.0,380.5 846.0,393.5 848.0,374.5 850.0,368.5 852.0,374.5 854.0,371.5 856.0,383.5 858.0,377.5 860.0,383.5 862.0,387.5 864.0,390.5 866.0,424.5 868.0,356.5 870.0,346.5 872.0,343.5 874.0,343.5 876.0,343.5 878.0,346.5 880.0,343.5 882.0,349.5 884.0,343.5 886.0,343.5 888.0,349.5 890.0,346.5 892.0,340.5 894.0,343.5 896.0,346.5 898.0,346.5 900.0,343.5 902.0,343.5 904.0,340.5 906.0,343.5 908.0,340.5 910.0,343.5 912.0,346.5 914.0,346.5 916.0,346.5 918.0,343.5 920.0,346.5 922.0,340.5 924.0,349.5 926.0,343.5 928.0,346.5 930.0,343.5 932.0,343.5 934.0,343.5 936.0,346.5 938.0,346.5 940.0,346.5 942.0,340.5 944.0,346.5 946.0,343.5 948.0,340.5 950.0,346.5 952.0,346.5 954.0,349.5 956.0,346.5 958.0,343.5 960.0,346.5 962.0,343.5 964.0,340.5 966.0,343.5 968.0,346.5 970.0,343.5 972.0,346.5 974.0,346.5 976.0,337.5 978.0,346.5 980.0,346.5 982.0,343.5 984.0,343.5 986.0,343.5 988.0,346.5 990.0,346.5 992.0,346.5 994.0,343.5 996.0,340.5 998.0,346.5 1000.0,346.5 1002.0,343.5 1004.0,346.5 1006.0,346.5 1008.0,340.5 1010.0,346.5 1012.0,343.5 1014.0,340.5 1016.0,346.5 1018.0,340.5 1020.0,343.5 1022.0,346.5 1024.0,340.5 1026.0,343.5 1028.0,343.5 1030.0,346.5 1032.0,346.5 1034.0,346.5 1036.0,343.5 1038.0,343.5 1040.0,343.5 1042.0,343.5 1044.0,346.5 1046.0,343.5 1048.0,343.5 1050.0,340.5 1052.0,343.5 1054.0,349.5 1056.0,343.5 1058.0,346.5 1060.0,340.5 1062.0,343.5 1064.0,340.5 1066.0,343.5 1068.0,346.5 1070.0,343.5 1072.0,343.5 1074.0,346.5 1076.0,334.5 1078.0,343.5 1080.0,346.5 1082.0,346.5 1084.0,343.5 1086.0,346.5 1088.0,349.5 1090.0,349.5 1092.0,343.5 1094.0,346.5 1096.0,343.5 1098.0,343.5 1100.0,340.5 1102.0,349.5 1104.0,343.5 1106.0,346.5 1108.0,346.5 1110.0,340.5 1112.0,349.5 1114.0,343.5 1116.0,346.5 1118.0,340.5 1120.0,349.5 1122.0,343.5 1124.0,343.5 1126.0,343.5 1128.0,343.5 1130.0,343.5 1132.0,349.5 1134.0,346.5 1136.0,349.5 1138.0,340.5 1140.0,340.5 1142.0,346.5 1144.0,340.5 1146.0,343.5 1148.0,349.5 1150.0,346.5 1152.0,343.5 1154.0,343.5 1156.0,346.5 1158.0,343.5 1160.0,343.5 1162.0,346.5 1164.0,346.5 1166.0,343.5 1168.0,340.5 1170.0,346.5 1172.0,343.5 1174.0,343.5 1176.0,343.5 1178.0,346.5 1180.0,337.5 1182.0,343.5 1184.0,340.5 1186.0,346.5 1188.0,337.5 1190.0,343.5 1192.0,349.5 1194.0,340.5 1196.0,343.5 1198.0,346.5 1200.0,343.5 1202.0,346.5 1204.0,343.5 1206.0,343.5 1208.0,346.5 1210.0,343.5 1212.0,340.5 1214.0,352.5 1216.0,340.5 1218.0,343.5 1220.0,340.5 1222.0,340.5 1224.0,343.5 1226.0,346.5 1228.0,343.5 1230.0,343.5 1232.0,343.5 1234.0,349.5 1236.0,346.5 1238.0,337.5 1240.0,343.5 1242.0,340.5 1244.0,343.5 1246.0,346.5 1248.0,340.5 1250.0,343.5 1252.0,346.5 1254.0,343.5 1256.0,343.5 1258.0,346.5 1260.0,346.5 1262.0,340.5 1264.0,340.5 1266.0,343.5 1268.0,340.5 1270.0,340.5 1272.0,343.5 1274.0,346.5 1276.0,340.5 1278.0,346.5 1280.0,343.5 1282.0,346.5 1284.0,340.5 1286.0,343.5 1288.0,343.5 1290.0,343.5 1292.0,337.5 1294.0,340.5 1296.0,349.5 1298.0,343.5 1300.0,343.5 1302.0,346.5 1304.0,346.5 1306.0,340.5 1308.0,340.5 1310.0,340.5 1312.0,343.5 1314.0,340.5 1316.0,343.5 1318.0,343.5 1320.0,343.5 1322.0,346.5 1324.0,346.5 1326.0,343.5 1328.0,346.5 1330.0,343.5 1332.0,346.5 1334.0,340.5 1336.0,346.5 1338.0,343.5 1340.0,340.5 1342.0,340.5 1344.0,346.5 1346.0,340.5 1348.0,343.5 1350.0,343.5 1352.0,343.5 1354.0,349.5 1356.0,343.5 1358.0,343.5 1360.0,340.5 1362.0,346.5 1364.0,340.5 1366.0,346.5 1368.0,346.5 1370.0,346.5 1372.0,343.5 1374.0,346.5 1376.0,340.5 1378.0,340.5 1380.0,340.5 1382.0,343.5 1384.0,346.5 1386.0,349.5 1388.0,343.5 1390.0,340.5 1392.0,340.5 1394.0,349.5 1396.0,343.5 1398.0,343.5 1400.0,346.5 1402.0,343.5 1404.0,346.5 1406.0,343.5 1408.0,343.5 1410.0,346.5 1412.0,343.5 1414.0,346.5 1416.0,343.5 1418.0,352.5 1420.0,343.5 1422.0,340.5 1424.0,346.5 1426.0,343.5 1428.0,343.5 1430.0,346.5 1432.0,346.5 1434.0,343.5 1436.0,343.5 1438.0,346.5 1440.0,343.5 1442.0,343.5 1444.0,346.5 1446.0,343.5 1448.0,340.5 1450.0,343.5 1452.0,343.5 1454.0,340.5 1456.0,346.5 1458.0,343.5 1460.0,340.5 1462.0,340.5 1464.0,346.5 1466.0,343.5 1468.0,343.5 1470.0,340.5 1472.0,343.5 1474.0,346.5 1476.0,340.5 1478.0,349.5 1480.0,343.5 1482.0,343.5 1484.0,340.5 1486.0,343.5 1488.0,349.5 1490.0,340.5 1492.0,346.5 1494.0,346.5 1496.0,340.5 1498.0,349.5 1500.0,337.5 1502.0,340.5 1504.0,340.5 1506.0,343.5 1508.0,343.5 1510.0,343.5 1512.0,343.5 1514.0,349.5 1516.0,343.5 1518.0,343.5 1520.0,340.5 1522.0,343.5 1524.0,343.5 1526.0,343.5 1528.0,349.5 1530.0,349.5 1532.0,343.5 1534.0,346.5 1536.0,343.5 1538.0,346.5 1540.0,346.5 1542.0,343.5 1544.0,343.5 1546.0,346.5 1548.0,343.5 1550.0,343.5 1552.0,346.5 1554.0,346.5 1556.0,343.5 1558.0,343.5 1560.0,343.5 1562.0,346.5 1564.0,352.5 1566.0,343.5 1568.0,343.5 1570.0,343.5 1572.0,349.5 1574.0,346.5 1576.0,343.5 1578.0,343.5 1580.0,343.5 1582.0,349.5 1584.0,343.5 1586.0,343.5 1588.0,343.5 1590.0,340.5 1592.0,343.5 1594.0,340.5 1596.0,346.5 1598.0,343.5 1600.0,343.5 1602.0,340.5 1604.0,346.5 1606.0,346.5 1608.0,346.5 1610.0,343.5 1612.0,346.5 1614.0,340.5 1616.0,343.5 1618.0,343.5 1620.0,343.5 1622.0,346.5 1624.0,337.5 1626.0,340.5 1628.0,346.5 1630.0,343.5 1632.0,349.5 1634.0,346.5 1636.0,349.5 1638.0,352.5 1640.0,352.5 1642.0,352.5 1644.0,352.5 1646.0,352.5 1648.0,352.5 1650.0,356.5 1652.0,352.5 1654.0,356.5 1656.0,352.5 1658.0,356.5 1660.0,359.5 1662.0,362.5 1664.0,362.5 1666.0,362.5 1668.0,365.5 1670.0,362.5 1672.0,371.5 1674.0,362.5 1676.0,371.5 1678.0,374.5 1680.0,374.5 1682.0,377.5 1684.0,377.5 1686.0,374.5 1688.0,383.5 1690.0,374.5 1692.0,383.5 1694.0,380.5 1696.0,374.5 1698.0,374.5 1700.0,377.5 1702.0,383.5 1704.0,380.5 1706.0,380.5 1708.0,380.5 1710.0,380.5 1712.0,377.5 1714.0,374.5 1716.0,377.5 1718.0,380.5 1720.0,377.5 1722.0,377.5 1724.0,374.5 1726.0,380.5 1728.0,380.5 1730.0,380.5 1732.0,383.5 1734.0,377.5 1736.0,380.5 1738.0,374.5 1740.0,374.5 1742.0,377.5 1744.0,377.5 1746.0,380.5 1748.0,377.5 1750.0,377.5 1752.0,371.5 1754.0,380.5 1756.0,371.5 1758.0,374.5 1760.0,374.5 1762.0,383.5 1764.0,380.5 1766.0,377.5 1768.0,377.5 1770.0,380.5 1772.0,371.5 1774.0,374.5 1776.0,374.5 1778.0,374.5 1780.0,377.5 1782.0,380.5 1784.0,374.5 1786.0,377.5 1788.0,374.5 1790.0,374.5 1792.0,377.5 1794.0,377.5 1796.0,371.5 1798.0,371.5 1800.0,374.5 1802.0,374.5 1804.0,374.5 1806.0,374.5 1808.0,368.5 1810.0,371.5 1812.0,374.5 1814.0,374.5 1816.0,371.5 1818.0,374.5 1820.0,371.5 1822.0,371.5 1824.0,377.5 1826.0,377.5 1828.0,377.5 1830.0,377.5 1832.0,374.5 1834.0,408.5 1836.0,445.5 1838.0,455.5 1840.0,455.5 1842.0,455.5 1844.0,458.5 1846.0,464.5 1848.0,464.5 1850.0,467.5 1852.0,473.5 1854.0,467.5" fill="none" stroke="#f060f0" stroke-width="1" shape-rendering="geometricPrecision" stroke-linejoin="bevel" /><polyline points="666.0,436.5 668.0,408.5 670.0,393.5 672.0,390.5 674.0,380.5 676.0,393.5 678.0,383.5 680.0,383.5 682.0,387.5 684.0,365.5 686.0,387.5 688.0,380.5 690.0,374.5 692.0,390.5 694.0,374.5 696.0,383.5 698.0,377.5 700.0,387.5 702.0,390.5 704.0,374.5 706.0,380.5 708.0,380.5 710.0,377.5 712.0,377.5 714.0,390.5 716.0,396.5 718.0,393.5 720.0,393.5 722.0,396.5 724.0,387.5 726.0,383.5 728.0,380.5 730.0,380.5 732.0,383.5 734.0,383.5 736.0,380.5 738.0,387.5 740.0,387.5 742.0,380.5 744.0,387.5 746.0,383.5 748.0,380.5 750.0,371.5 752.0,380.5 754.0,383.5 756.0,383.5 758.0,380.5 760.0,368.5 762.0,402.5 764.0,377.5 766.0,380.5 768.0,374.5 770.0,387.5 772.0,368.5 774.0,374.5 776.0,380.5 778.0,380.5 780.0,383.5 782.0,380.5 784.0,380.5 786.0,374.5 788.0,377.5 790.0,380.5 792.0,377.5 794.0,377.5 796.0,377.5 798.0,390.5 800.0,374.5 802.0,387.5 804.0,387.5 806.0,380.5 808.0,377.5 810.0,371.5 812.0,390.5 814.0,371.5 816.0,368.5 818.0,383.5 820.0,380.5 822.0,383.5 824.0,383.5 826.0,387.5 828.0,390.5 830.0,380.5 832.0,377.5 834.0,368.5 836.0,387.5 838.0,393.5 840.0,377.5 842.0,383.5 844.0,377.5 846.0,380.5 848.0,387.5 850.0,383.5 852.0,374.5 854.0,377.5 856.0,383.5 858.0,374.5 860.0,387.5 862.0,380.5 864.0,390.5 866.0,424.5 868.0,356.5 870.0,343.5 872.0,343.5 874.0,343.5 876.0,346.5 878.0,346.5 880.0,346.5 882.0,334.5 884.0,346.5 886.0,340.5 888.0,346.5 890.0,340.5 892.0,340.5 894.0,343.5 896.0,346.5 898.0,346.5 900.0,340.5 902.0,346.5 904.0,346.5 906.0,340.5 908.0,340.5 910.0,343.5 912.0,343.5 914.0,346.5 916.0,343.5 918.0,346.5 920.0,346.5 922.0,346.5 924.0,343.5 926.0,349.5 928.0,346.5 930.0,343.5 932.0,340.5 934.0,343.5 936.0,343.5 938.0,337.5 940.0,346.5 942.0,346.5 944.0,340.5 946.0,340.5 948.0,343.5 950.0,349.5 952.0,340.5 954.0,340.5 956.0,343.5 958.0,340.5 960.0,340.5 962.0,343.5 964.0,346.5 966.0,349.5 968.0,343.5 970.0,346.5 972.0,346.5 974.0,346.5 976.0,343.5 978.0,340.5 980.0,343.5 982.0,346.5 984.0,340.5 986.0,343.5 988.0,349.5 990.0,343.5 992.0,349.5 994.0,346.5 996.0,340.5 998.0,343.5 1000.0,346.5 1002.0,346.5 1004.0,343.5 1006.0,349.5 1008.0,343.5 1010.0,343.5 1012.0,340.5 1014.0,343.5 1016.0,346.5 1018.0,343.5 1020.0,343.5 1022.0,346.5 1024.0,346.5 1026.0,346.5 1028.0,343.5 1030.0,340.5 1032.0,343.5 1034.0,346.5 1036.0,343.5 1038.0,343.5 1040.0,340.5 1042.0,346.5 1044.0,343.5 1046.0,343.5 1048.0,349.5 1050.0,346.5 1052.0,346.5 1054.0,346.5 1056.0,343.5 1058.0,346.5 1060.0,343.5 1062.0,346.5 1064.0,349.5 1066.0,343.5 1068.0,346.5 1070.0,340.5 1072.0,346.5 1074.0,340.5 1076.0,346.5 1078.0,346.5 1080.0,340.5 1082.0,337.5 1084.0,346.5 1086.0,340.5 1088.0,340.5 1090.0,340.5 1092.0,343.5 1094.0,349.5 1096.0,349.5 1098.0,346.5 1100.0,343.5 1102.0,343.5 1104.0,346.5 1106.0,343.5 1108.0,349.5 1110.0,343.5 1112.0,346.5 1114.0,340.5 1116.0,343.5 1118.0,346.5 1120.0,346.5 1122.0,349.5 1124.0,343.5 1126.0,346.5 1128.0,343.5 1130.0,340.5 1132.0,343.5 1134.0,343.5 1136.0,337.5 1138.0,340.5 1140.0,340.5 1142.0,343.5 1144.0,346.5 1146.0,343.5 1148.0,346.5 1150.0,352.5 1152.0,343.5 1154.0,343.5 1156.0,346.5 1158.0,340.5 1160.0,343.5 1162.0,346.5 1164.0,346.5 1166.0,340.5 1168.0,346.5 1170.0,346.5 1172.0,346.5 1174.0,346.5 1176.0,349.5 1178.0,346.5 1180.0,346.5 1182.0,340.5 1184.0,346.5 1186.0,340.5 1188.0,346.5 1190.0,346.5 1192.0,343.5 1194.0,343.5 1196.0,343.5 1198.0,343.5 1200.0,343.5 1202.0,349.5 1204.0,346.5 1206.0,340.5 1208.0,343.5 1210.0,349.5 1212.0,343.5 1214.0,340.5 1216.0,340.5 1218.0,343.5 1220.0,343.5 1222.0,343.5 1224.0,343.5 1226.0,346.5 1228.0,340.5 1230.0,343.5 1232.0,340.5 1234.0,349.5 1236.0,346.5 1238.0,346.5 1240.0,343.5 1242.0,346.5 1244.0,346.5 1246.0,346.5 1248.0,343.5 1250.0,340.5 1252.0,346.5 1254.0,343.5 1256.0,343.5 1258.0,346.5 1260.0,343.5 1262.0,340.5 1264.0,352.5 1266.0,340.5 1268.0,337.5 1270.0,343.5 1272.0,340.5 1274.0,340.5 1276.0,343.5 1278.0,343.5 1280.0,340.5 1282.0,340.5 1284.0,343.5 1286.0,340.5 1288.0,346.5 1290.0,343.5 1292.0,343.5 1294.0,343.5 1296.0,346.5 1298.0,340.5 1300.0,343.5 1302.0,340.5 1304.0,346.5 1306.0,346.5 1308.0,346.5 1310.0,343.5 1312.0,340.5 1314.0,337.5 1316.0,343.5 1318.0,343.5 1320.0,343.5 1322.0,346.5 1324.0,340.5 1326.0,343.5 1328.0,346.5 1330.0,343.5 1332.0,343.5 1334.0,343.5 1336.0,343.5 1338.0,340.5 1340.0,343.5 1342.0,340.5 1344.0,343.5 1346.0,343.5 1348.0,343.5 1350.0,343.5 1352.0,343.5 1354.0,343.5 1356.0,337.5 1358.0,343.5 1360.0,343.5 1362.0,343.5 1364.0,340.5 1366.0,346.5 1368.0,346.5 1370.0,340.5 1372.0,340.5 1374.0,343.5 1376.0,346.5 1378.0,340.5 1380.0,343.5 1382.0,346.5 1384.0,346.5 1386.0,346.5 1388.0,340.5 1390.0,343.5 1392.0,346.5 1394.0,346.5 1396.0,340.5 1398.0,343.5 1400.0,346.5 1402.0,346.5 1404.0,346.5 1406.0,343.5 1408.0,343.5 1410.0,346.5 1412.0,343.5 1414.0,346.5 1416.0,346.5 1418.0,346.5 1420.0,346.5 1422.0,346.5 1424.0,343.5 1426.0,343.5 1428.0,346.5 1430.0,340.5 1432.0,346.5 1434.0,340.5 1436.0,346.5 1438.0,343.5 1440.0,340.5 1442.0,340.5 1444.0,346.5 1446.0,343.5 1448.0,346.5 1450.0,343.5 1452.0,343.5 1454.0,346.5 1456.0,340.5 1458.0,343.5 1460.0,340.5 1462.0,346.5 1464.0,343.5 1466.0,343.5 1468.0,340.5 1470.0,340.5 1472.0,343.5 1474.0,346.5 1476.0,346.5 1478.0,337.5 1480.0,340.5 1482.0,340.5 1484.0,343.5 1486.0,337.5 1488.0,343.5 1490.0,343.5 1492.0,346.5 1494.0,346.5 1496.0,340.5 1498.0,343.5 1500.0,343.5 1502.0,346.5 1504.0,349.5 1506.0,346.5 1508.0,340.5 1510.0,337.5 1512.0,346.5 1514.0,343.5 1516.0,349.5 1518.0,346.5 1520.0,343.5 1522.0,346.5 1524.0,343.5 1526.0,340.5 1528.0,343.5 1530.0,346.5 1532.0,340.5 1534.0,343.5 1536.0,343.5 1538.0,343.5 1540.0,343.5 1542.0,340.5 1544.0,346.5 1546.0,343.5 1548.0,346.5 1550.0,343.5 1552.0,340.5 1554.0,343.5 1556.0,337.5 1558.0,343.5 1560.0,371.5 1562.0,343.5 1564.0,343.5 1566.0,343.5 1568.0,343.5 1570.0,343.5 1572.0,340.5 1574.0,349.5 1576.0,340.5 1578.0,346.5 1580.0,343.5 1582.0,346.5 1584.0,340.5 1586.0,349.5 1588.0,346.5 1590.0,343.5 1592.0,340.5 1594.0,346.5 1596.0,343.5 1598.0,340.5 1600.0,346.5 1602.0,352.5 1604.0,340.5 1606.0,343.5 1608.0,343.5 1610.0,340.5 1612.0,340.5 1614.0,346.5 1616.0,343.5 1618.0,346.5 1620.0,343.5 1622.0,343.5 1624.0,343.5 1626.0,346.5 1628.0,343.5 1630.0,343.5 1632.0,343.5 1634.0,346.5 1636.0,356.5 1638.0,349.5 1640.0,356.5 1642.0,349.5 1644.0,352.5 1646.0,352.5 1648.0,352.5 1650.0,346.5 1652.0,356.5 1654.0,349.5 1656.0,349.5 1658.0,346.5 1660.0,352.5 1662.0,356.5 1664.0,362.5 1666.0,362.5 1668.0,365.5 1670.0,359.5 1672.0,362.5 1674.0,368.5 1676.0,365.5 1678.0,368.5 1680.0,365.5 1682.0,368.5 1684.0,377.5 1686.0,371.5 1688.0,368.5 1690.0,371.5 1692.0,371.5 1694.0,377.5 1696.0,377.5 1698.0,374.5 1700.0,368.5 1702.0,374.5 1704.0,374.5 1706.0,365.5 1708.0,377.5 1710.0,374.5 1712.0,377.5 1714.0,374.5 1716.0,368.5 1718.0,368.5 1720.0,371.5 1722.0,368.5 1724.0,374.5 1726.0,371.5 1728.0,377.5 1730.0,368.5 1732.0,377.5 1734.0,368.5 1736.0,377.5 1738.0,371.5 1740.0,371.5 1742.0,371.5 1744.0,374.5 1746.0,365.5 1748.0,371.5 1750.0,377.5 1752.0,374.5 1754.0,368.5 1756.0,377.5 1758.0,365.5 1760.0,374.5 1762.0,380.5 1764.0,368.5 1766.0,377.5 1768.0,387.5 1770.0,371.5 1772.0,374.5 1774.0,371.5 1776.0,371.5 1778.0,371.5 1780.0,374.5 1782.0,377.5 1784.0,368.5 1786.0,371.5 1788.0,371.5 1790.0,377.5 1792.0,374.5 1794.0,371.5 1796.0,374.5 1798.0,371.5 1800.0,374.5 1802.0,377.5 1804.0,371.5 1806.0,374.5 1808.0,371.5 1810.0,368.5 1812.0,374.5 1814.0,374.5 1816.0,368.5 1818.0,371.5 1820.0,374.5 1822.0,368.5 1824.0,371.5 1826.0,374.5 1828.0,374.5 1830.0,374.5 1832.0,371.5 1834.0,408.5 1836.0,449.5 1838.0,449.5 1840.0,455.5 1842.0,458.5 1844.0,461.5 1846.0,464.5 1848.0,467.5 1850.0,464.5 1852.0,464.5 1854.0,461.5" fill="none" stroke="#38e8e8" stroke-width="1" shape-rendering="geometricPrecision" stroke-linejoin="bevel" /><polyline points="666.0,445.5 669.0,443.5 673.0,441.5 680.0,438.5 686.0,433.5 701.0,433.5 703.0,430.5 720.0,430.5 722.0,427.5 755.0,427.5 757.0,423.5 815.0,423.5 817.0,420.5 864.0,420.5 866.0,423.5 868.0,421.5 872.0,417.5 884.0,417.5 886.0,414.5 924.0,414.5 926.0,411.5 1103.0,411.5 1105.0,408.5 1107.0,411.5 1111.0,411.5 1113.0,408.5 1115.0,411.5 1116.0,411.5 1118.0,408.5 1120.0,411.5 1121.0,411.5 1123.0,408.5 1128.0,408.5 1130.0,411.5 1132.0,408.5 1432.0,408.5 1434.0,411.5 1436.0,408.5 1438.0,408.5 1440.0,411.5 1445.0,411.5 1447.0,408.5 1449.0,411.5 1461.0,411.5 1463.0,408.5 1465.0,411.5 1473.0,411.5 1475.0,408.5 1477.0,411.5 1487.0,411.5 1489.0,408.5 1491.0,411.5 1493.0,408.5 1495.0,408.5 1497.0,411.5 1632.0,411.5 1634.0,414.5 1645.0,414.5 1647.0,417.5 1660.0,417.5 1662.0,420.5 1667.0,420.5 1669.0,423.5 1675.0,423.5 1677.0,427.5 1685.0,427.5 1687.0,430.5 1706.0,430.5 1708.0,433.5 1737.0,433.5 1739.0,436.5 1778.0,436.5 1780.0,439.5 1834.0,439.5 1836.0,442.5 1838.0,446.5 1841.0,446.5 1842.0,449.5 1844.0,449.5 1845.0,452.5 1849.0,452.5 1850.0,455.5 1855.0,455.5" fill="none" stroke="#e0e4ff" stroke-width="1" shape-rendering="geometricPrecision" stroke-linejoin="bevel" /><path d="M666.5 234V550M866.5 234V550" stroke="#fff" stroke-dasharray="3 3" fill="none"/><path d="M864.5 234V550M1834.5 234V550" stroke="#fff" stroke-dasharray="18 6" fill="none"/><rect x="692" y="214" width="11" height="11" fill="#fff"/><path d="M694 219.5L696.5 222L701.5 216.5" stroke="#222" stroke-width="1.2" fill="none" shape-rendering="geometricPrecision"/><rect x="739" y="214" width="11" height="11" fill="#fff"/><path d="M741 219.5L743.5 222L748.5 216.5" stroke="#222" stroke-width="1.2" fill="none" shape-rendering="geometricPrecision"/><rect x="829" y="214" width="11" height="11" fill="#fff"/><path d="M831 219.5L833.5 222L838.5 216.5" stroke="#222" stroke-width="1.2" fill="none" shape-rendering="geometricPrecision"/><rect x="919" y="214" width="11" height="11" fill="#fff"/><path d="M921 219.5L923.5 222L928.5 216.5" stroke="#222" stroke-width="1.2" fill="none" shape-rendering="geometricPrecision"/><rect x="1009" y="214" width="11" height="11" fill="#fff"/><path d="M1011 219.5L1013.5 222L1018.5 216.5" stroke="#222" stroke-width="1.2" fill="none" shape-rendering="geometricPrecision"/><rect x="1099" y="214" width="11" height="11" fill="#fff"/><path d="M1101 219.5L1103.5 222L1108.5 216.5" stroke="#222" stroke-width="1.2" fill="none" shape-rendering="geometricPrecision"/></svg>
<svg class="ch" style="left:31px;top:583px" width="1874" height="375" viewBox="31 583 1874 375" shape-rendering="crispEdges"><rect x="31" y="583" width="1874" height="375" fill="#000"/><path d="M87.5 613V929 M97.5 613V929 M107.5 613V929 M117.5 613V929 M127.5 613V929 M137.5 613V929 M147.5 613V929 M157.5 613V929 M167.5 613V929 M177.5 613V929 M187.5 613V929 M197.5 613V929 M207.5 613V929 M217.5 613V929 M227.5 613V929 M237.5 613V929 M247.5 613V929 M257.5 613V929 M267.5 613V929 M277.5 613V929 M287.5 613V929 M297.5 613V929 M307.5 613V929 M317.5 613V929 M327.5 613V929 M337.5 613V929 M347.5 613V929 M357.5 613V929 M367.5 613V929 M377.5 613V929 M387.5 613V929 M397.5 613V929 M407.5 613V929 M417.5 613V929 M427.5 613V929 M437.5 613V929 M447.5 613V929 M457.5 613V929 M467.5 613V929 M477.5 613V929 M487.5 613V929 M497.5 613V929 M507.5 613V929 M517.5 613V929 M527.5 613V929 M537.5 613V929 M547.5 613V929 M557.5 613V929 M567.5 613V929 M577.5 613V929 M587.5 613V929 M597.5 613V929 M607.5 613V929 M617.5 613V929 M627.5 613V929 M637.5 613V929 M647.5 613V929 M657.5 613V929 M667.5 613V929 M677.5 613V929 M687.5 613V929 M697.5 613V929 M707.5 613V929 M717.5 613V929 M727.5 613V929 M737.5 613V929 M747.5 613V929 M757.5 613V929 M767.5 613V929 M777.5 613V929 M787.5 613V929 M797.5 613V929 M807.5 613V929 M817.5 613V929 M827.5 613V929 M837.5 613V929 M847.5 613V929 M857.5 613V929 M867.5 613V929 M877.5 613V929 M887.5 613V929 M897.5 613V929 M907.5 613V929 M917.5 613V929 M927.5 613V929 M937.5 613V929 M947.5 613V929 M957.5 613V929 M967.5 613V929 M977.5 613V929 M987.5 613V929 M997.5 613V929 M1007.5 613V929 M1017.5 613V929 M1027.5 613V929 M1037.5 613V929 M1047.5 613V929 M1057.5 613V929 M1067.5 613V929 M1077.5 613V929 M1087.5 613V929 M1097.5 613V929 M1107.5 613V929 M1117.5 613V929 M1127.5 613V929 M1137.5 613V929 M1147.5 613V929 M1157.5 613V929 M1167.5 613V929 M1177.5 613V929 M1187.5 613V929 M1197.5 613V929 M1207.5 613V929 M1217.5 613V929 M1227.5 613V929 M1237.5 613V929 M1247.5 613V929 M1257.5 613V929 M1267.5 613V929 M1277.5 613V929 M1287.5 613V929 M1297.5 613V929 M1307.5 613V929 M1317.5 613V929 M1327.5 613V929 M1337.5 613V929 M1347.5 613V929 M1357.5 613V929 M1367.5 613V929 M1377.5 613V929 M1387.5 613V929 M1397.5 613V929 M1407.5 613V929 M1417.5 613V929 M1427.5 613V929 M1437.5 613V929 M1447.5 613V929 M1457.5 613V929 M1467.5 613V929 M1477.5 613V929 M1487.5 613V929 M1497.5 613V929 M1507.5 613V929 M1517.5 613V929 M1527.5 613V929 M1537.5 613V929 M1547.5 613V929 M1557.5 613V929 M1567.5 613V929 M1577.5 613V929 M1587.5 613V929 M1597.5 613V929 M1607.5 613V929 M1617.5 613V929 M1627.5 613V929 M1637.5 613V929 M1647.5 613V929 M1657.5 613V929 M1667.5 613V929 M1677.5 613V929 M1687.5 613V929 M1697.5 613V929 M1707.5 613V929 M1717.5 613V929 M1727.5 613V929 M1737.5 613V929 M1747.5 613V929 M1757.5 613V929 M1767.5 613V929 M1777.5 613V929 M1787.5 613V929 M1797.5 613V929 M1807.5 613V929 M1817.5 613V929 M1827.5 613V929 M1837.5 613V929 M1847.5 613V929 M81 618.5H1856 M81 649.5H1856 M81 680.5H1856 M81 711.5H1856 M81 742.5H1856 M81 773.5H1856 M81 804.5H1856 M81 835.5H1856 M81 866.5H1856 M81 897.5H1856" stroke="#22862a" stroke-width="1" fill="none"/><path d="M79 928.5H1856" stroke="#30c838" stroke-width="1" fill="none"/><polyline points="83.0,613.5 1746.5,613.5 1747.5,860.0 1747.9,883.0 1749.2,897.5 1750.5,905.0 1753.0,911.0 1754.7,919.0 1756.4,919.0 1757.7,910.0 1760.3,916.0 1762.4,916.0 1764.5,913.0 1766.7,919.7 1770.0,910.7 1773.5,916.7 1776.5,922.7 1778.6,910.7 1781.2,916.0 1782.4,913.7 1785.4,922.7 1786.7,922.7 1788.4,900.5 1790.5,919.0 1792.2,913.0 1794.8,922.7 1798.2,906.5 1800.8,918.8 1804.0,918.8 1806.3,922.0 1808.4,906.5 1811.0,916.0 1812.7,913.0 1816.5,925.6 1818.7,900.5 1820.4,918.8 1822.5,906.5 1824.6,925.6 1828.0,910.0 1830.6,919.0 1832.7,916.0 1836.6,916.0 1838.7,913.0 1842.5,919.0 1844.7,919.0 1846.4,922.7 1848.5,894.0 1850.2,916.0 1852.3,910.0 1854.9,916.7" fill="none" stroke="#f4f060" stroke-width="1" shape-rendering="geometricPrecision" stroke-linejoin="bevel" /></svg>
<span class="t" style="left:72.6px;top:224.9px;font-size:11px;color:#e4e4e4;transform:scaleX(.99)">100<span style="position:relative;top:-2.5px;font-size:13px">°</span>C</span>
<span class="t" style="left:84.4px;top:539.9px;font-size:11px;color:#e4e4e4;transform:scaleX(.99)">0<span style="position:relative;top:-2.5px;font-size:13px">°</span>C</span>
<div class="bk" style="left:143px;width:80px"></div>
<div class="bk" style="left:321px;width:140px"></div>
<div class="bk" style="left:569px;width:80px"></div>
<div class="btn" style="left:16px"></div>
<div class="btn" style="left:201px"></div>
<div class="btn" style="left:386px"></div>
<div class="btn" style="left:467px"></div>
<div class="btn" style="left:1847px"></div>
<div class="btn" style="left:97px;background:#cccccc;border-color:#bfbfbf"></div>
<div class="btn" style="left:282px;background:#d6eafa;border-color:#0078d7"></div>
<span class="t" style="left:31.2px;top:10.1px;font-size:12px;color:#000;transform:scaleX(1.0733)">System Stability Test - AIDA64</span><span class="t" style="left:67.1px;top:52.6px;font-size:12px;color:#000;transform:scaleX(0.9000)">Stress CPU</span><span class="t" style="left:67.1px;top:72.6px;font-size:12px;color:#000;transform:scaleX(0.8800)">Stress FPU</span><span class="t" style="left:67.1px;top:92.6px;font-size:12px;color:#000;transform:scaleX(0.9368)">Stress cache</span><span class="t" style="left:67.0px;top:112.6px;font-size:12px;color:#000;transform:scaleX(0.9686)">Stress system memory</span><span class="t" style="left:67.1px;top:132.6px;font-size:12px;color:#000;transform:scaleX(0.9359)">Stress local disks</span><span class="t" style="left:67.1px;top:152.6px;font-size:12px;color:#000;transform:scaleX(0.8934)">Stress GPU(s)</span><span class="t" style="left:199.0px;top:57.6px;font-size:12px;color:#000;transform:scaleX(1.0077)">Date &amp; Time</span><span class="t" style="left:349.1px;top:57.6px;font-size:12px;color:#000;transform:scaleX(0.9485)">Status</span><span class="t" style="left:200.0px;top:79.8px;font-size:12px;color:#000;transform:scaleX(0.9389)">2021/5/8 0:38:28</span><span class="t" style="left:349.0px;top:79.8px;font-size:12px;color:#000;transform:scaleX(0.9640)">Stability Test: Started</span><span class="t" style="left:200.0px;top:98.8px;font-size:12px;color:#000;transform:scaleX(0.9389)">2021/5/8 0:46:42</span><span class="t" style="left:349.0px;top:98.8px;font-size:12px;color:#000;transform:scaleX(0.9752)">Stability Test: Stopped</span><span class="t" style="left:200.0px;top:117.8px;font-size:12px;color:#000;transform:scaleX(0.9389)">2021/5/8 0:46:48</span><span class="t" style="left:349.0px;top:117.8px;font-size:12px;color:#000;transform:scaleX(0.9640)">Stability Test: Started</span><span class="t" style="left:200.0px;top:136.8px;font-size:12px;color:#000;transform:scaleX(0.9389)">2021/5/8 1:27:12</span><span class="t" style="left:349.0px;top:136.8px;font-size:12px;color:#000;transform:scaleX(0.9752)">Stability Test: Stopped</span><span class="t" style="left:40.2px;top:180.6px;font-size:12px;color:#000;transform:scaleX(0.9630)">Temperatures</span><span class="t" style="left:123.2px;top:182.5px;font-size:12px;color:#000;transform:scaleX(0.9606)">Cooling Fans</span><span class="t" style="left:203.9px;top:182.5px;font-size:12px;color:#000;transform:scaleX(0.9457)">Voltages</span><span class="t" style="left:259.2px;top:182.5px;font-size:12px;color:#000;transform:scaleX(0.9564)">Powers</span><span class="t" style="left:310.0px;top:182.5px;font-size:12px;color:#000;transform:scaleX(0.9556)">Clocks</span><span class="t" style="left:357.3px;top:182.5px;font-size:12px;color:#000;transform:scaleX(1.0222)">Unified</span><span class="t" style="left:407.2px;top:182.5px;font-size:12px;color:#000;transform:scaleX(0.9638)">Statistics</span><span class="t" style="left:707.5px;top:210.2px;font-size:11px;color:#d4dcf4;transform:scaleX(0.8696)">CPU</span><span class="t" style="left:754.7px;top:210.2px;font-size:11px;color:#35e035;transform:scaleX(0.9600)">CPU Core #1</span><span class="t" style="left:844.2px;top:210.2px;font-size:11px;color:#35e0e0;transform:scaleX(0.9862)">CPU Core #2</span><span class="t" style="left:934.2px;top:210.2px;font-size:11px;color:#e850e8;transform:scaleX(0.9831)">CPU Core #3</span><span class="t" style="left:1024.6px;top:210.2px;font-size:11px;color:#e4e4dc;transform:scaleX(0.9831)">CPU Core #4</span><span class="t" style="left:1114.5px;top:210.2px;font-size:11px;color:#f0cc98;transform:scaleX(0.9608)">WDC WD4005FZBX-00K5WB0</span><span class="t" style="left:630.2px;top:550.2px;font-size:11px;color:#e4e4e4;transform:scaleX(1.0028)">0:38:28</span><span class="t" style="left:830.7px;top:550.2px;font-size:11px;color:#e4e4e4;transform:scaleX(0.9889)">0:46:48</span><span class="t" style="left:865.5px;top:550.2px;font-size:11px;color:#e4e4e4;transform:scaleX(0.9611)">0:46:42</span><span class="t" style="left:1834.2px;top:550.2px;font-size:11px;color:#e4e4e4;transform:scaleX(1.0029)">1:27:12</span><span class="t" style="left:1858.8px;top:440.4px;font-size:11px;color:#f0cc98;transform:scaleX(0.9583)">32</span><span class="t" style="left:1872.6px;top:446.5px;font-size:11px;color:#c8d8f4;transform:scaleX(0.9750)">30</span><span class="t" style="left:1872.6px;top:452.7px;font-size:11px;color:#e0e8d8;transform:scaleX(0.9750)">28</span><span class="t" style="left:1859.0px;top:455.4px;font-size:11px;color:#35d035;transform:scaleX(0.9417)">27</span><span class="t" style="left:1872.6px;top:459.7px;font-size:11px;color:#d880e8;transform:scaleX(0.9750)">26</span><span class="t" style="left:49.8px;top:604.1px;font-size:11px;color:#e4e4e4;transform:scaleX(0.9815)">100%</span><span class="t" style="left:62.4px;top:919.1px;font-size:11px;color:#e4e4e4;transform:scaleX(0.9312)">0%</span><span class="t" style="left:894.6px;top:588.9px;font-size:11px;color:#f0e860;transform:scaleX(0.9603)">CPU Usage</span><span class="t" style="left:956.4px;top:588.9px;font-size:11px;color:#f0f0f0;transform:scaleX(1.0000)">|</span><span class="t" style="left:965.6px;top:588.9px;font-size:11px;color:#35d835;transform:scaleX(1.0577)">CPU Throttling</span><span class="t" style="left:1858.4px;top:906.8px;font-size:11px;color:#f0e860;transform:scaleX(0.9125)">4%</span><span class="t" style="left:1858.4px;top:920.2px;font-size:11px;color:#35d835;transform:scaleX(0.9125)">0%</span><span class="t" style="left:31.2px;top:974.8px;font-size:12px;color:#000;transform:scaleX(0.9890)">Remaining Battery:</span><span class="t" style="left:156.4px;top:973.9px;font-size:11px;color:#2fd22f;font-weight:700;transform:scaleX(0.9981)">No battery</span><span class="t" style="left:247.4px;top:974.8px;font-size:12px;color:#000;transform:scaleX(0.9209)">Test Started:</span><span class="t" style="left:349.0px;top:973.9px;font-size:11px;color:#2fd22f;transform:scaleX(1.0207)">2021/5/8 0:46:48</span><span class="t" style="left:485.3px;top:974.8px;font-size:12px;color:#000;transform:scaleX(0.9554)">Elapsed Time:</span><span class="t" style="left:588.4px;top:973.9px;font-size:11px;color:#2fd22f;transform:scaleX(0.9744)">00:40:24</span><span class="t" style="left:40.2px;top:1019.5px;font-size:12px;color:#000;transform:scaleX(0.9360)">Start</span><span class="t" style="left:121.0px;top:1019.5px;font-size:12px;color:#838383;transform:scaleX(0.9750)">Stop</span><span class="t" style="left:224.9px;top:1019.5px;font-size:12px;color:#000;transform:scaleX(0.9241)">Clear</span><span class="t" style="left:306.1px;top:1019.5px;font-size:12px;color:#000;transform:scaleX(0.9115)">Save</span><span class="t" style="left:405.8px;top:1019.5px;font-size:12px;color:#000;transform:scaleX(0.9081)">CPUID</span><span class="t" style="left:473.1px;top:1019.5px;font-size:12px;color:#000;transform:scaleX(0.9406)">Preferences</span><span class="t" style="left:1870.3px;top:1019.5px;font-size:12px;color:#000;transform:scaleX(0.9533)">Close</span></body></html>
